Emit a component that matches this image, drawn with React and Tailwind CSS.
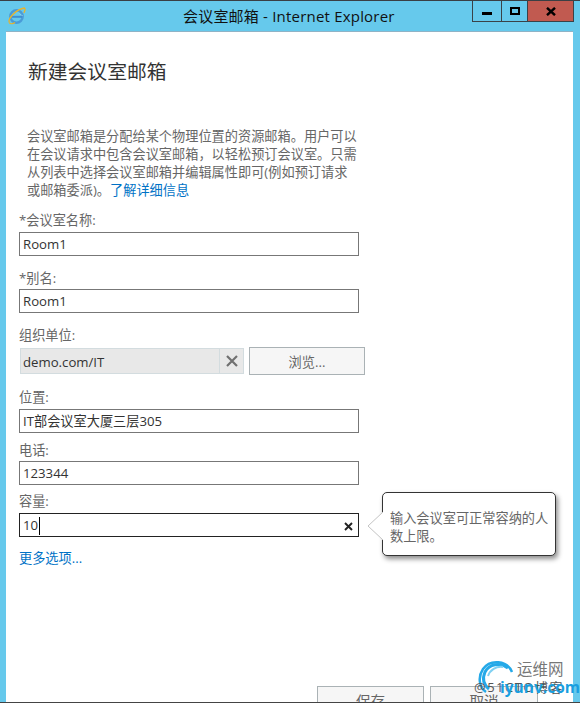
const font = { fontFamily: '"Open Sans","Noto Sans CJK SC",sans-serif' };

function Label({ children, className = "" }) {
  return <div className={`h-[18px] text-[13.2px] leading-[18px] text-[#666] ${className}`}>{children}</div>;
}

function Field({ value, focused }) {
  return (
    <div className={`flex h-[24px] w-[340px] items-center border bg-white pl-[3px] pt-[2px] text-[13.2px] text-[#333] ${focused ? "border-[#222]" : "border-[#777]"}`}>
      <span>{value}</span>
      {focused && <span className="ml-px h-[18px] w-px bg-black" />}
      {focused && (
        <svg className="ml-auto mr-[5px]" width="9" height="9" viewBox="0 0 9 9">
          <path d="M1 1 L8 8 M8 1 L1 8" stroke="#222" strokeWidth="1.9" />
        </svg>
      )}
    </div>
  );
}

function IELogo() {
  return (
    <svg width="18" height="18" viewBox="0 0 18 18">
      <circle cx="8.5" cy="9.5" r="6.2" fill="none" stroke="#4a9bd8" strokeWidth="2.4" />
      <path d="M3.5 9.8 H14" stroke="#3f8fd0" strokeWidth="2" />
      <path d="M10 5.5 L15 9 H14.5" fill="#fff" />
      <path d="M1.3 15.5 C-0.5 11 9 2 16.5 1 C17.5 1.5 17 4 15.8 6" fill="none" stroke="#e9b32a" strokeWidth="1.3" />
      <path d="M1.3 15.5 C2 17.5 5 16.8 7 15.5" fill="none" stroke="#e9b32a" strokeWidth="1.2" />
    </svg>
  );
}

export default function App() {
  return (
    <div style={font} className="relative flex h-[703px] w-[580px] flex-col overflow-hidden border-t border-b border-t-[#3a3f44] border-b-[#444] bg-[#66c9ec]">
      <header className="relative flex h-[30px] shrink-0 items-start">
        <div className="ml-[8px] mt-[6px]"><IELogo /></div>
        <div className="absolute left-[183px] top-[6px] text-[15px] leading-[18px] tracking-[0.2px] text-[#111]">会议室邮箱 - Internet Explorer</div>
        <div className="ml-auto mr-[6px] flex h-[21px] border-x border-b border-[#3a4248]">
          <div className="flex w-[28px] items-end justify-center pb-[6px]">
            <div className="h-[3px] w-[10px] bg-black" />
          </div>
          <div className="flex w-[26px] items-center justify-center border-l border-[#3a4248]">
            <div className="h-[8px] w-[10px] border-2 border-black" />
          </div>
          <div className="flex w-[46px] items-center justify-center border-l border-[#3a4248] bg-[#c15a50]">
            <svg width="10" height="9" viewBox="0 0 10 9"><path d="M1 0.8 L9 8.2 M9 0.8 L1 8.2" stroke="#000" strokeWidth="2.4" /></svg>
          </div>
        </div>
      </header>
      <main className="ml-[6px] mr-[7px] flex min-h-0 flex-1 flex-col overflow-hidden border-t border-[#8fb3c6] bg-white pl-[13px]">
        <h1 className="ml-[9px] mt-[26px] h-[28px] text-[19.8px] font-normal leading-[28px] text-[#333]">新建会议室邮箱</h1>
        <p className="ml-[8px] mt-[41px] w-[332px] text-[13.2px] leading-[18px] text-[#666]">
          会议室邮箱是分配给某个物理位置的资源邮箱。用户可以在会议请求中包含会议室邮箱，以轻松预订会议室。只需从列表中选择会议室邮箱并编辑属性即可(例如预订请求或邮箱委派)。<span className="text-[#0072c6]">了解详细信息</span>
        </p>
        <Label className="mt-[12px]">*会议室名称:</Label>
        <div className="mt-[3px]"><Field value="Room1" /></div>
        <Label className="mt-[13px]">*别名:</Label>
        <div className="mt-[2px]"><Field value="Room1" /></div>
        <Label className="mt-[13px]">组织单位:</Label>
        <div className="mt-[3px] flex items-center">
          <div className="ml-px flex h-[26px] w-[224px] items-center border border-[#d3dcdf] bg-[#e8e8e8]">
            <span className="flex-1 pl-[2px] pt-[3px] text-[13.2px] text-[#333]">demo.com/IT</span>
            <div className="flex h-full w-[24px] items-center justify-center border-l border-[#d3dcdf]">
              <svg width="12" height="12" viewBox="0 0 12 12"><path d="M1 1 L11 11 M11 1 L1 11" stroke="#707070" strokeWidth="2.2" /></svg>
            </div>
          </div>
          <div className="ml-[5px] flex h-[28px] w-[116px] items-center justify-center border border-[#aab2b5] bg-[#f6f6f6] pt-[3px] text-[13.2px] text-[#666]">浏览...</div>
        </div>
        <Label className="mt-[13px]">位置:</Label>
        <div className="mt-[3px]"><Field value="IT部会议室大厦三层305" /></div>
        <Label className="mt-[8px]">电话:</Label>
        <div className="mt-[2px]"><Field value="123344" /></div>
        <Label className="mt-[7px]">容量:</Label>
        <div className="mt-[3px]"><Field value="10" focused /></div>
        <div className="mt-[12px] h-[18px] text-[13.2px] leading-[18px] text-[#0072c6]">更多选项...</div>
        <footer className="mt-auto flex h-[16px] shrink-0 pl-[298px]">
          <div className="flex h-[28px] w-[107px] items-start justify-center border border-[#aab2b5] bg-[#f6f6f6] pt-[3px] text-[14.6px] leading-[22px] text-[#666]">保存</div>
          <div className="ml-[6px] flex h-[28px] w-[108px] items-start justify-center border border-[#aab2b5] bg-[#f6f6f6] pt-[3px] text-[14.6px] leading-[22px] text-[#666]">取消</div>
        </footer>
      </main>

      {/* tooltip */}
      <div className="absolute left-[382px] top-[491px] h-[64px] w-[174px] rounded-[5px] border border-[#333] bg-white pl-[7px] pr-[2px] pt-[16px] text-[13.2px] leading-[18px] text-[#666] shadow-[2px_3px_5px_rgba(0,0,0,0.45)]">
        输入会议室可正常容纳的人数上限。
      </div>
      <svg className="absolute left-[366px] top-[510px]" width="18" height="30" viewBox="0 0 18 30">
        <path d="M17 1 L2 15 L17 29 Z" fill="#fff" />
        <path d="M17 1 L2 15 L17 29" fill="none" stroke="#c4c4c4" strokeWidth="1" />
      </svg>

      {/* watermark */}
      <svg className="absolute left-[474px] top-[654px]" width="44" height="44" viewBox="0 0 44 44">
        <path d="M38 17 C33 5 16 4 9 14 C3 23 6 33 12 37" fill="none" stroke="#25a9e8" strokeWidth="2.5" />
        <path d="M34 13 C26 7 15 9 11 17 C8 24 10 30 15 34" fill="none" stroke="#25a9e8" strokeWidth="3" />
        <path d="M29 12 C22 11 16 15 14 21" fill="none" stroke="#7fd0f2" strokeWidth="2" />
      </svg>
      <div className="absolute left-[517px] top-[658px] text-[15.5px] leading-[20px] text-[#777]">运维网</div>
      <div className="absolute left-[474px] top-[677px] text-[13px] tracking-[1.5px] leading-[18px] text-[#555]">@51CTO博客</div>
      <div className="absolute left-[500px] top-[676px] text-[15.5px] font-bold leading-[20px] text-[#1a9fe0]">iyunv.com</div>
    </div>
  );
}
